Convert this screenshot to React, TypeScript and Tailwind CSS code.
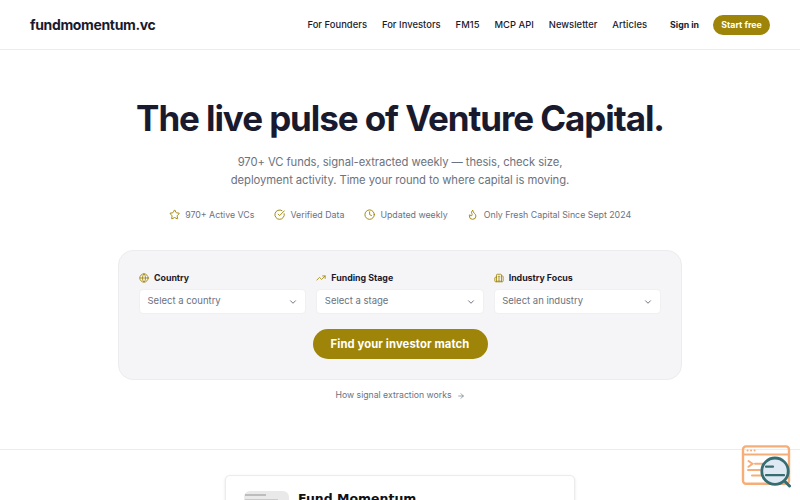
import type { ReactNode } from "react";
import {
  ArrowRight,
  Building2,
  ChevronDown,
  CircleCheckBig,
  Clock,
  Flame,
  Globe,
  Star,
  TrendingUp,
} from "lucide-react";

const NAV_ITEMS = ["For Founders", "For Investors", "FM15", "MCP API", "Newsletter", "Articles"];

const STATS = [
  { icon: Star, label: "970+ Active VCs" },
  { icon: CircleCheckBig, label: "Verified Data" },
  { icon: Clock, label: "Updated weekly" },
  { icon: Flame, label: "Only Fresh Capital Since Sept 2024" },
];

function Header() {
  return (
    <header className="h-[50px] border-b border-[#ececef] pl-[30px] pr-[30px] flex items-center justify-between">
      <a href="#" className="text-[14px] leading-5 font-bold tracking-[-0.35px] text-[#1a1a2e]">
        fundmomentum.vc
      </a>
      <div className="flex items-center whitespace-nowrap">
        <nav className="flex gap-[14.9px] pt-[2px] text-[9.375px] font-medium tracking-[0.05px] text-[#1a1a2e]">
          {NAV_ITEMS.map((item) => (
            <a key={item} href="#">
              {item}
            </a>
          ))}
        </nav>
        <a href="#" className="ml-[23px] pt-[2px] text-[8.75px] font-bold text-[#1a1a2e]">
          Sign in
        </a>
        <a
          href="#"
          className="ml-[14px] w-[57px] h-5 pt-[2px] rounded-full bg-[#9e8409] text-white text-[8.75px] font-bold flex items-center justify-center"
        >
          Start free
        </a>
      </div>
    </header>
  );
}

function Field({ icon, label, placeholder }: { icon: ReactNode; label: string; placeholder: string }) {
  return (
    <div>
      <div className="flex items-center gap-[5px] h-3 text-[8.8px] leading-3 font-bold text-[#1a1a2e]">
        {icon}
        {label}
      </div>
      <button className="mt-[5px] w-full h-[25px] rounded-[4px] bg-white border border-[#f0f0f2] pl-[7.5px] pr-[7px] flex items-center justify-between text-[9.5px] text-[#6b7280]">
        {placeholder}
        <ChevronDown size={10} className="text-[#555b66]" />
      </button>
    </div>
  );
}

function Hero() {
  return (
    <section className="h-[400px] border-b border-[#ececef] flex flex-col items-center">
      <h1 className="mt-[46px] text-[35px] leading-[45px] font-bold tracking-[-1.08px] text-[#1a1a2e] whitespace-nowrap">
        The live pulse of Venture Capital.
      </h1>
      <p className="mt-3 text-[11.25px] leading-[18px] tracking-[-0.07px] text-center text-[#6b7280]">
        970+ VC funds, signal-extracted weekly — thesis, check size,
        <br />
        deployment activity. Time your round to where capital is moving.
      </p>

      <div className="mt-[19px] flex gap-[19.8px] h-[14px] text-[8.8px] leading-[14px] text-[#6b7280] whitespace-nowrap">
        {STATS.map(({ icon: Icon, label }) => (
          <div key={label} className="flex items-center gap-[5px]">
            <Icon size={11.25} className="text-[#9e8409]" />
            {label}
          </div>
        ))}
      </div>

      <div className="mt-7 w-[564px] h-[130px] rounded-[15px] bg-[#f5f5f7] border border-[#ececef] px-5 pt-[21px] flex flex-col items-center">
        <div className="w-full grid grid-cols-3 gap-[10px]">
          <Field icon={<Globe size={10} className="text-[#9e8409]" />} label="Country" placeholder="Select a country" />
          <Field icon={<TrendingUp size={10} className="text-[#9e8409]" />} label="Funding Stage" placeholder="Select a stage" />
          <Field icon={<Building2 size={10} className="text-[#9e8409]" />} label="Industry Focus" placeholder="Select an industry" />
        </div>
        <button className="mt-[15px] w-[175px] h-[30px] rounded-full bg-[#9e8409] text-white text-[11.25px] font-bold tracking-[0.12px]">
          Find your investor match
        </button>
      </div>

      <a href="#" className="mt-[9px] flex items-center gap-[5px] text-[8.7px] leading-[13px] text-[#6b7280]">
        How signal extraction works
        <ArrowRight size={8} />
      </a>
    </section>
  );
}

function LaunchCard() {
  return (
    <div className="mt-[25px] mx-auto w-[350px] h-[100px] rounded-[5px] border border-[#ececec] bg-white shadow-sm px-[18px] pt-[15px] flex gap-[9px]">
      <div className="w-[45px] h-[50px] rounded-[6px] bg-[#e9e9e9] overflow-hidden">
        <div className="mt-[3px] ml-[1px] w-[21px] h-[2px] bg-[#bdbdbd]" />
        <div className="mt-[3px] ml-[1px] w-[33px] h-px bg-[#cacaca]" />
      </div>
      <div className="font-['DejaVu_Sans',sans-serif] text-[12.5px] leading-4 font-bold text-[#111111]">
        Fund Momentum
      </div>
    </div>
  );
}

function InspectBadge() {
  return (
    <svg
      className="absolute left-[741px] top-[444px]"
      width="50"
      height="45"
      viewBox="0 0 50 45"
      fill="none"
      strokeLinecap="round"
    >
      <rect x="2" y="2.4" width="46" height="37.3" rx="3" stroke="#f6ad78" strokeWidth="2.4" />
      <path d="M2 10.6h46" stroke="#f6ad78" strokeWidth="2" />
      <path d="M6.5 6.5h.2M10 6.5h.2M13.5 6.5h.2" stroke="#f6ad78" strokeWidth="1.8" />
      <path d="M7.5 17l4 2.8-4 3M14 19.7h9M7 26h12M11 31.5h10" stroke="#f6ad78" strokeWidth="2" />
      <circle cx="34" cy="27.2" r="13.2" fill="#dfe9f3" stroke="#356d70" strokeWidth="2.8" />
      <path d="M25 22.7h7M25 31.2h18" stroke="#356d70" strokeWidth="2.2" />
      <path d="M43.5 37l5 5" stroke="#356d70" strokeWidth="3" />
    </svg>
  );
}

export default function App() {
  return (
    <div className="relative h-[500px] w-[800px] overflow-hidden bg-white font-['Inter',sans-serif]">
      <Header />
      <Hero />
      <LaunchCard />
      <InspectBadge />
    </div>
  );
}
